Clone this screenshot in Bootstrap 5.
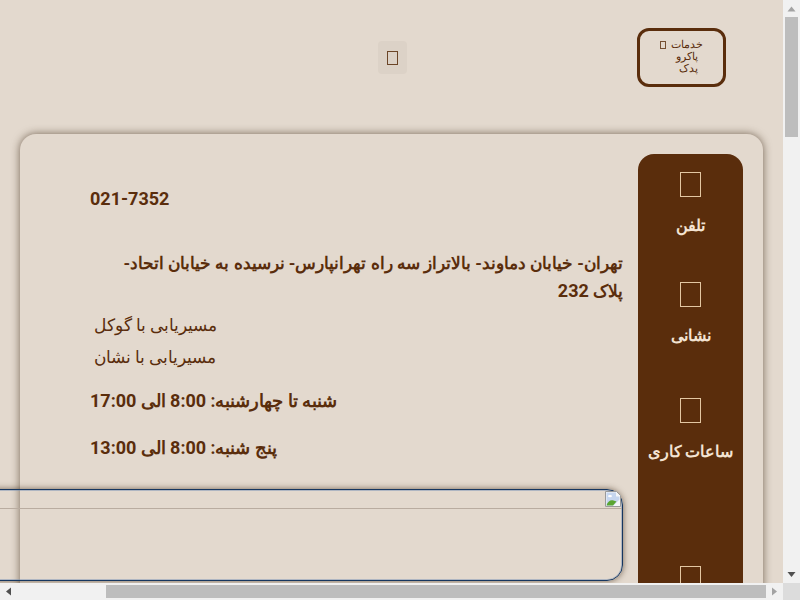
<!DOCTYPE html>
<html lang="fa">

<head>
  <meta charset="utf-8">
  <title>تماس با ما</title>
  <link href="https://cdn.jsdelivr.net/npm/bootstrap@5.3.2/dist/css/bootstrap.min.css" rel="stylesheet" type="text/css" />
  <style>
    html, body {
      height: 100%;
      overflow: hidden;
    }

    body {
      background: #e3d9ce;
      color: #5a2d0c;
      font-family: Roboto, "Noto Sans", sans-serif;
    }

    .browser-frame {
      height: 600px;
    }

    .page-view {
      width: 783px;
      height: 583px;
      overflow: hidden;
    }

    /* scrollbars of the page */
    .scroll-y {
      width: 17px;
      background: #f1f1f1;
    }

    .scroll-x {
      height: 17px;
      background: #f1f1f1;
    }

    .scroll-btn {
      flex: 0 0 17px;
    }

    .thumb-y {
      width: 13px;
      height: 120px;
      margin-left: 2px;
      background: #bdbdbd;
    }

    .scroll-track-x {
      padding: 2px 0 0 89px;
    }

    .thumb-x {
      width: 660px;
      height: 13px;
      background: #bdbdbd;
    }

    .scroll-corner {
      flex: 0 0 17px;
      background: #dcdcdc;
    }

    .top-bar {
      height: 134px;
      padding: 28px 57px 0 0;
    }

    .services-box {
      width: 89px;
      height: 59px;
      border: 3px solid #5a2d0c;
      border-radius: 12px;
      font-size: 11px;
      line-height: 12px;
      padding: 8px 20px 0 0;
    }

    .services-box span {
      display: block;
    }

    .services-box .second-line {
      padding-right: 5px;
    }

    .services-box .tofu {
      width: 6px;
      height: 8px;
      margin-right: 5px;
      vertical-align: -1px;
      opacity: .8;
    }

    .tofu {
      display: inline-block;
      border: 1px solid currentColor;
    }

    .menu-toggle {
      width: 29px;
      height: 33px;
      margin-top: 13px;
      margin-right: 230px;
      background: #dcd2c7;
      border-radius: 4px;
    }

    .menu-toggle .tofu {
      width: 11px;
      height: 14px;
      border-color: #6b4527;
    }

    .main-panel {
      margin: 0 20px 0 20px;
      height: 2400px;
      padding: 20px;
      border-radius: 16px;
      box-shadow: 0 0 9px rgba(60, 40, 20, .65);
    }

    .side-menu {
      flex: 0 0 105px;
      background: #5a2d0c;
      color: #f3e3d2;
      border-radius: 16px;
      padding-top: 18px;
    }

    .side-item {
      text-align: center;
      font-size: 16px;
      font-weight: 700;
    }

    .side-item .tofu {
      display: block;
      width: 21px;
      height: 25px;
      margin: 0 auto;
      color: #e3c7a3;
    }

    .side-item b {
      display: block;
      margin-top: 17px;
      line-height: 24px;
    }

    .item-phone { height: 110px; }
    .item-address { height: 116px; }
    .item-hours { height: 168px; }

    .info-col {
      margin-right: 15px;
      margin-left: 50px;
      flex: 1 1 auto;
      min-width: 0;
      font-weight: 700;
      font-size: 17.5px;
      text-align: left;
    }

    .info-col .latin {
      font-size: 18px;
    }

    .info-line {
      line-height: 26px;
      margin: 0;
    }

    .phone-line { padding-top: 32px; height: 96px; }

    .address-line {
      font-size: 16.9px;
      text-align: right;
      line-height: 27px;
      margin-bottom: 4px;
    }

    .route-link {
      display: block;
      font-size: 17px;
      font-weight: 400;
      line-height: 32px;
      padding-left: 4px;
      color: #5a2d0c;
      text-decoration: none;
    }

    .hours-first { margin-top: 15px; }
    .hours-next { margin-top: 21px; }

    .map-box {
      position: relative;
      width: 730px;
      height: 92px;
      margin-top: 28px;
      border: 1px solid #16365f;
      border-radius: 16px;
      box-shadow: 0 0 6px rgba(60, 40, 20, .65), inset 0 0 0 1px rgba(110, 140, 180, .45);
    }

    .map-box hr {
      margin: 18px 0 0;
      border-top: 1px solid #b9aca0;
      opacity: 1;
    }

    .map-broken {
      position: absolute;
      top: 0;
      right: 0;
    }
  </style>
</head>

<body>
  <div class="browser-frame d-flex flex-column">
    <div class="d-flex">
      <div class="page-view" dir="rtl">
        <header class="top-bar d-flex">
          <div class="services-box">
            <span>خدمات<i class="tofu"></i></span>
            <span class="second-line">پاکرو</span>
            <span class="second-line">پدک</span>
          </div>
          <button class="menu-toggle btn p-0 border-0 d-flex align-items-center justify-content-center" type="button"><i class="tofu"></i></button>
        </header>

        <main class="main-panel d-flex">
          <nav class="side-menu">
            <div class="side-item item-phone"><i class="tofu"></i><b>تلفن</b></div>
            <div class="side-item item-address"><i class="tofu"></i><b>نشانی</b></div>
            <div class="side-item item-hours"><i class="tofu"></i><b>ساعات کاری</b></div>
            <div class="side-item"><i class="tofu"></i></div>
          </nav>

          <section class="info-col">
            <p class="info-line phone-line"><span class="latin">021-7352</span></p>
            <p class="info-line address-line">تهران- خیابان دماوند- بالاتراز سه راه تهرانپارس- نرسیده به خیابان اتحاد-<br>پلاک <span class="latin">232</span></p>
            <a class="route-link" href="#">مسیریابی با گوکل</a>
            <a class="route-link" href="#">مسیریابی با نشان</a>
            <p class="info-line hours-first">شنبه تا چهارشنبه: <span class="latin">8:00</span> الی <span class="latin">17:00</span></p>
            <p class="info-line hours-next">پنج شنبه: <span class="latin">8:00</span> الی <span class="latin">13:00</span></p>
            <div class="map-box">
              <hr>
              <svg class="map-broken" width="18" height="18" viewBox="0 0 18 18">
                <path d="M1.500 1.500h11l4 4v11h-15z" fill="#f4f6f8" stroke="#9a9a9a" />
                <path d="M2.500 2.500h9.500v4h3.500v3l-6 6h-7z" fill="#c6d6ef" />
                <path d="M2.500 15.500c1-4 4-6 7-5l3 1-3.500 4z" fill="#5aa532" />
                <path d="M4 6a2 1 0 0 1 4 0 1.500 1 0 0 1-4 0z" fill="#fff" />
              </svg>
            </div>
          </section>
        </main>
      </div>

      <div class="scroll-y d-flex flex-column">
        <svg class="scroll-btn" width="17" height="17" viewBox="0 0 17 17"><path d="M4.500 11.500l4-5 4 5z" fill="#a3a3a3" /></svg>
        <div class="thumb-y"></div>
        <div class="flex-grow-1"></div>
        <svg class="scroll-btn" width="17" height="17" viewBox="0 0 17 17"><path d="M4.500 6l4 5 4-5z" fill="#505050" /></svg>
      </div>
    </div>

    <div class="d-flex">
      <div class="scroll-x flex-grow-1 d-flex">
        <svg class="scroll-btn" width="17" height="17" viewBox="0 0 17 17"><path d="M11 4.500l-5 4 5 4z" fill="#505050" /></svg>
        <div class="scroll-track-x flex-grow-1"><div class="thumb-x"></div></div>
        <svg class="scroll-btn" width="17" height="17" viewBox="0 0 17 17"><path d="M6 4.500l5 4-5 4z" fill="#a3a3a3" /></svg>
      </div>
      <div class="scroll-corner"></div>
    </div>
  </div>

  <script src="https://cdn.jsdelivr.net/npm/bootstrap@5.3.2/dist/js/bootstrap.bundle.min.js"></script>
</body>

</html>
